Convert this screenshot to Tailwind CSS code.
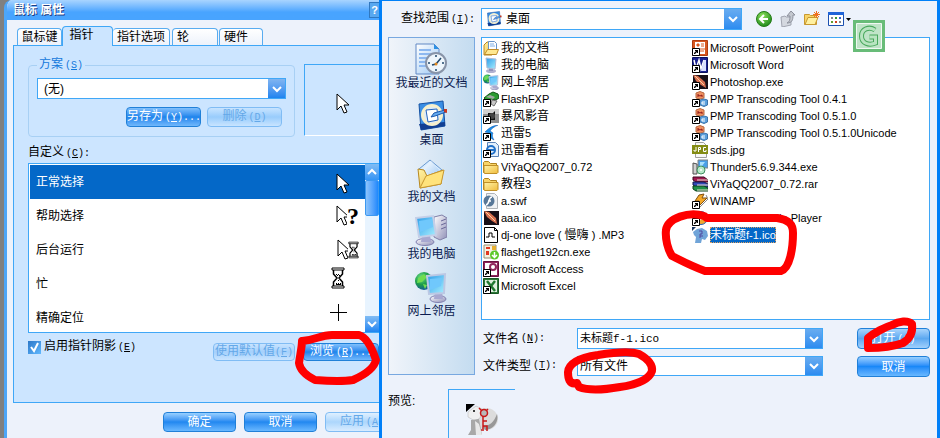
<!DOCTYPE html>
<html lang="zh-CN">
<head>
  <meta charset="UTF-8">
  <meta name="viewport" content="width=device-width, initial-scale=1.0">
  <title>鼠标 属性</title>
  <script src="https://cdn.jsdelivr.net/npm/@tailwindcss/browser@4"></script>
</head>
<body class="bg-[#808080] text-[12px] leading-[16px] text-black font-['Liberation_Sans','Noto_Sans_CJK_SC',sans-serif]">

<!-- shared icons -->
<svg class="absolute size-0">
  <defs>
    <linearGradient id="gScreen" x1="0" y1="0" x2="1" y2="1"><stop offset="0" stop-color="#2c9be8"/><stop offset="1" stop-color="#a8f0ff"/></linearGradient>
    <linearGradient id="gPaper" x1="0" y1="0" x2="1" y2="1"><stop offset="0" stop-color="#ffffff"/><stop offset="1" stop-color="#9cc8f4"/></linearGradient>
    <linearGradient id="gFolder" x1="0" y1="0" x2="1" y2="1"><stop offset="0" stop-color="#fff3a8"/><stop offset="1" stop-color="#f0bc3c"/></linearGradient>
    <linearGradient id="gGrey" x1="0" y1="0" x2="1" y2="1"><stop offset="0" stop-color="#ffffff"/><stop offset="1" stop-color="#9090b8"/></linearGradient>
    <radialGradient id="gGlobe" cx=".35" cy=".3" r=".8"><stop offset="0" stop-color="#6fe08a"/><stop offset=".5" stop-color="#1c9c48"/><stop offset="1" stop-color="#1448b0"/></radialGradient>
    <radialGradient id="gGreen" cx=".4" cy=".3" r=".8"><stop offset="0" stop-color="#8ce05c"/><stop offset="1" stop-color="#148014"/></radialGradient>
  </defs>
  <symbol id="chevron-down" viewBox="0 0 10 8"><path d="M1 2l4 4 4-4" fill="none" stroke="#fff" stroke-width="2"/></symbol>
  <symbol id="chevron-up" viewBox="0 0 10 8"><path d="M1 6l4-4 4 4" fill="none" stroke="#fff" stroke-width="2"/></symbol>
  <symbol id="shortcut" viewBox="0 0 16 16"><path d="M.5 8.500h7v7h-7z" fill="#fff" stroke="#000"/><path d="M2 14v-1l2-2H3v-1h3v3H5v-1l-2 2z"/></symbol>
  <symbol id="cursor" viewBox="0 0 13 22"><path d="M1 1v16l4-4 3 7 3-1-3-7h5z" fill="#fff" stroke="#000"/></symbol>
  <symbol id="hourglass" viewBox="0 0 14 22"><path d="M1 1h12v2H1zM1 19h12v2H1z" fill="#fff" stroke="#000"/><path d="M2.500 3v4l3.500 4-3.500 4v4M11.500 3v4L8 11l3.500 4v4" fill="none" stroke="#000" stroke-width="1.500"/><path d="M5 7h1v1H5zm2 0h1v1H7zM6 8h1v1H6zm2 0h1v1H8zm-1 5h1v1H7zm-2 3h1v1H5zm2 0h1v1H7zm2 0h1v1H9zm-4 1h5v1H5z"/></symbol>
  <symbol id="desktop" viewBox="0 0 32 32"><path d="M3 4l24-3 2 25-24 4z" fill="#3a8ee4" stroke="#1854a4"/><path d="M3 24l26-2v4L5 30z" fill="#123f92"/><circle cx="16" cy="15" r="9.500" fill="#dcebf9" stroke="#f7f0cc" stroke-width="3"/><path d="M10 10l11-1 1 11-10 2z" fill="#fff" stroke="#2464bc"/><path d="M15 17l3-4 11-3 1 2-11 4z" fill="#64aaf0" stroke="#1c58ac"/><path d="M28 9l3 0v4l-3-1z" fill="#c83820"/></symbol>
  <symbol id="recent" viewBox="0 0 32 32"><path d="M1 1h18l5 5v25H1z" fill="url(#gPaper)" stroke="#6088c4"/><path d="M4 7h12M4 11h14M4 15h10M4 19h8M4 23h8" stroke="#8cb8f0" stroke-width="2"/><path d="M19 1v5h5z" fill="#2c90e4"/><circle cx="21" cy="20" r="10" fill="#eef6fc" stroke="#8894a8" stroke-width="2"/><path d="M21 12v2M21 26v2M13 20h2M27 20h2M17 22l4-1 5-6" fill="none" stroke="#20486c" stroke-width="1.500"/><circle cx="21" cy="21" r="1.500" fill="#e08820"/></symbol>
  <symbol id="mydocs" viewBox="0 0 32 32"><path d="M4 12l11-9 12 10-11 9z" fill="#d8ecff" stroke="#6898d0"/><path d="M8 12l8-8 9 10-8 7z" fill="url(#gPaper)"/><path d="M3 12l6 1 3 6 16-6-2 14-21 4z" fill="url(#gFolder)" stroke="#b88820"/><path d="M5 31l6-12 18-6-3 14z" fill="#ffe37c" stroke="#c89830"/></symbol>
  <symbol id="computer" viewBox="0 0 32 32"><path d="M19 3l8-2 5 3v19l-7 3-6-3z" fill="url(#gGrey)" stroke="#8080a8"/><path d="M26 7l5-2M26 11l5-2M26 15l5-2" stroke="#686898"/><ellipse cx="10" cy="28" rx="9" ry="3.500" fill="url(#gGrey)" stroke="#8080b0"/><path d="M7 21h8l1 7H6z" fill="#a8a8d0"/><path d="M1 4l17-2 3 19-17 2z" fill="url(#gScreen)" stroke="#c4cfe8" stroke-width="2"/><path d="M4 7l13-2 1 8-13 5z" fill="#70c8fc"/></symbol>
  <symbol id="monitor" viewBox="0 0 16 16"><ellipse cx="8" cy="14" rx="5" ry="2" fill="#b0b0d0"/><path d="M6 10h4v4H6z" fill="#9090b8"/><path d="M3 1l10 1-1 10-8-1z" fill="url(#gScreen)" stroke="#b0bcd8"/></symbol>
  <symbol id="network" viewBox="0 0 32 32"><circle cx="9" cy="10" r="9" fill="url(#gGlobe)"/><path d="M3 7l6-4 3 3-5 5-5 1zM8 13l4 1-2 4z" fill="#70dc50"/><ellipse cx="23" cy="28" rx="8" ry="3.500" fill="url(#gGrey)" stroke="#8080b0"/><path d="M20 21h7l1 7h-9z" fill="#a8a8d0"/><path d="M12 5l18-2-1 19-15 1z" fill="url(#gScreen)" stroke="#bcc8e4" stroke-width="2"/><path d="M15 8l12-1-1 8-11 4z" fill="#70c8fc"/></symbol>
  <symbol id="docs" viewBox="0 0 16 16"><path d="M1 5l3-3h5v13H1z" fill="url(#gFolder)" stroke="#b88820"/><path d="M5.500 1.500h6l2 2v9h-8z" fill="#fff" stroke="#6894c8"/><path d="M7 4h4M7 6h5" stroke="#80b0e8"/><path d="M1.500 14.500l3-5h11l-2 5z" fill="#ffe890" stroke="#c08c28"/></symbol>
  <symbol id="folder" viewBox="0 0 16 16"><path d="M.5 13.500V3.500l1-1h4l2 2h6v9z" fill="#f8d468" stroke="#b08420"/><path d="M1 14V6.500h14v7l-1 1H2z" fill="url(#gFolder)" stroke="#c09028"/></symbol>
  <symbol id="flashfxp" viewBox="0 0 16 16"><path d="M6 3l4-2 5 2 1 4-3 2-5-1-4 2-3-3z" fill="#2c9c30" stroke="#135818"/><path d="M3 6l4-2 5 2-2 2z" fill="#a0a8a0"/><path d="M9 9l5 1-3 5-3-2z" fill="#c8c8c8" stroke="#707070"/></symbol>
  <symbol id="storm" viewBox="0 0 16 16"><path d="M0 1h16v14H0z" fill="#909090"/><path d="M0 1h16v5H0z" fill="#d0d0d0"/><path d="M5 5h5l2-2v9H5z" fill="#101010"/><circle cx="9" cy="8" r="3" fill="#444"/></symbol>
  <symbol id="thunder" viewBox="0 0 16 16"><path d="M15 0C8 1 5 4 2 7l4 1c0 3 1 5 5 7-2-3-2-5-1-7L7 6c2-3 4-4 8-6z" fill="#1890ec" stroke="#0c50a8" stroke-width=".5"/></symbol>
  <symbol id="iepage" viewBox="0 0 16 16"><path d="M4.500.5h8l3 3v11h-11z" fill="#e4f0fc" stroke="#5c84b8"/><circle cx="8" cy="8" r="4" fill="none" stroke="#2070c8" stroke-width="2"/><path d="M4 8h8" stroke="#2070c8" stroke-width="2"/></symbol>
  <symbol id="swf" viewBox="0 0 16 16"><path d="M3.500.5h8l3 3v12h-11z" fill="#f0f2f4" stroke="#b0b4b8"/><circle cx="6" cy="8" r="5.500" fill="#587898"/><path d="M9 4C5 4 7 11 3 12M5 8h3" fill="none" stroke="#fff" stroke-width="1.500"/></symbol>
  <symbol id="feather" viewBox="0 0 16 16"><path d="M1 1h15v14H1z" fill="#181018"/><path d="M1 1l5 1 7 6 1 6-5-3-5-4z" fill="#d87050"/><path d="M3 2l9 9" stroke="#ffd0a0"/></symbol>
  <symbol id="mp3" viewBox="0 0 16 16"><path d="M1.500.5h10l3 3v12h-13z" fill="#fff" stroke="#000"/><path d="M11.500.5v3h3M3 10h3V6h3v4h3" fill="none" stroke="#000"/></symbol>
  <symbol id="flashget" viewBox="0 0 16 16"><path d="M1 1h12v13H1z" fill="#f4f0e0" stroke="#989070"/><path d="M3 3h4v2H3zM3 7h3v4H3z" fill="#e03820"/><path d="M9 2h4v4H9z" fill="#e8b030"/><circle cx="11.500" cy="11" r="4.500" fill="#5cc828"/><path d="M11.500 8v5M9 11l2.500 2.500L14 11" fill="none" stroke="#fff" stroke-width="1.500"/></symbol>
  <symbol id="access" viewBox="0 0 16 16"><path d="M.5.500h15v15H.5z" fill="#90245c" stroke="#681040"/><path d="M2 2h12v12H2z" fill="#fff"/><circle cx="10" cy="6" r="3" fill="none" stroke="#90245c" stroke-width="2"/><path d="M8 8l-5 5" stroke="#90245c" stroke-width="2"/></symbol>
  <symbol id="excel" viewBox="0 0 16 16"><path d="M.5.500h15v15H.5z" fill="#2c7838" stroke="#185824"/><path d="M2 2h12v12H2z" fill="#e0f0e0"/><path d="M4 3l8 10M12 3L4 13" stroke="#207830" stroke-width="2.500"/></symbol>
  <symbol id="ppt" viewBox="0 0 16 16"><path d="M.5.500h15v15H.5z" fill="#d85820" stroke="#b03c10"/><path d="M3 2h10v12H3z" fill="#fff"/><path d="M5 4h2v2H5zM9 4h3M9 6h3M8 9h5M7 11h5" fill="#d85820" stroke="#d85820"/></symbol>
  <symbol id="word" viewBox="0 0 16 16"><path d="M.5.500h15v15H.5z" fill="#182090" stroke="#081060"/><path d="M2 3l2 9 3-9 2 9 3-9" fill="none" stroke="#fff" stroke-width="1.500"/><path d="M12 3h2v11H9z" fill="#d8e0ff"/></symbol>
  <symbol id="pmp" viewBox="0 0 16 16"><path d="M4 2l4-1.500L12 2v5L8 8 4 7z" fill="#f09060" stroke="#b86840"/><path d="M6 3v3M6 4l2 1 2-1v2" fill="none" stroke="#901818"/><path d="M8 9l4-1 3.500 1v5L12 15.500 8 14z" fill="#5ca0dc" stroke="#3c74ac"/><path d="M13 11h-3v2h3" fill="none" stroke="#fff"/></symbol>
  <symbol id="jpg" viewBox="0 0 16 16"><path d="M3.500.5h8l3 3v12h-11z" fill="#f8f8f8" stroke="#a0a0a0"/><path d="M0 3h16v9H0z" fill="#848c14"/><path d="M4 5v4H2V8M6.500 10V5.500h2v2h-2M14 5.500h-2.500v4H14V8" fill="none" stroke="#fff"/></symbol>
  <symbol id="setup" viewBox="0 0 16 16"><path d="M6 1h10v8H6z" fill="#4aa0e8" stroke="#808080"/><path d="M8 3h5l-3 4H8z" fill="#a8e0ff"/><path d="M1 4l4 1v10H1z" fill="#d0d0d0" stroke="#505050"/><circle cx="9" cy="11" r="4" fill="#b8e8c8" stroke="#409060"/><circle cx="9" cy="11" r="1" fill="#fff"/></symbol>
  <symbol id="rar" viewBox="0 0 16 16"><path d="M1 1h11l4 3v2H4L1 4z" fill="#a01850" stroke="#400820"/><path d="M1 6h11l4 2v3H4L1 9z" fill="#3048b8" stroke="#101848"/><path d="M1 10h11l4 2v3H4l-3-2z" fill="#209048" stroke="#084018"/><path d="M5 4h11M5 9h11M5 14h11" stroke="#e8e0d0"/></symbol>
  <symbol id="winamp" viewBox="0 0 16 16"><path d="M7 2l5-1-2 4h5l-9 9 1-6H3z" fill="#f4a828" stroke="#805010"/><path d="M14 2l2 4-9 9" fill="none" stroke="#888"/></symbol>
  <symbol id="wmp" viewBox="0 0 16 16"><circle cx="9" cy="8" r="6.500" fill="#f0a830" stroke="#2860b0"/><path d="M7 5l5 3-5 3z" fill="#fff"/></symbol>
  <symbol id="dogico" viewBox="0 0 16 16"><path d="M0 0h4L0 4z" fill="#183460"/><path d="M1 5l4-3 5-1 5 3 1 5-3 4-3-1-1 4H3l1-6-2-2z" fill="#70a4d8"/><path d="M7 4h3v3H8v4M8 9h3" fill="none" stroke="#5048a0"/></symbol>
</svg>

<main class="relative grid min-h-[438px] grid-cols-[379fr_561fr] overflow-hidden">

  <!-- mouse properties -->
  <section class="ml-1 flex min-w-0 flex-col overflow-hidden rounded-tl-lg border-l-3 border-[#4da6f8] bg-[#edf2fb]">
    <header class="flex h-5 items-center justify-between bg-linear-to-b from-[#a8d4ff] to-[#48a4ff] to-60% pl-1.5">
      <h1 class="font-bold text-white [text-shadow:1px_1px_0_#203c80]">鼠标 属性</h1>
      <button aria-label="帮助" class="h-4 w-2.5 border border-r-0 border-[#3078c0] bg-[#58a8f0] text-[11px] leading-[14px] font-bold text-white">?</button>
    </header>

    <nav class="relative z-10 -mb-px flex h-[26px] items-end pl-2.5">
      <button class="h-[18px] w-[45px] rounded-t-sm border border-b-[#3fa7f7] border-[#58acf0] bg-linear-to-b from-white to-[#edf2fb] whitespace-nowrap">鼠标键</button>
      <button class="h-5 w-[51px] rounded-t-sm border border-b-0 border-[#3fa7f7] bg-[#cce5ff] pr-3 pb-1">指针</button>
      <button class="mr-0.5 h-[18px] w-[57px] rounded-t-sm border border-l-0 border-b-[#3fa7f7] border-[#58acf0] bg-linear-to-b from-white to-[#edf2fb] whitespace-nowrap">指针选项</button>
      <button class="mr-px h-[18px] w-[46px] rounded-t-sm border border-b-[#3fa7f7] border-[#58acf0] bg-linear-to-b from-white to-[#edf2fb] pl-1 text-left">轮</button>
      <button class="h-[18px] w-11 rounded-t-sm border border-b-[#3fa7f7] border-[#58acf0] bg-linear-to-b from-white to-[#edf2fb] pl-1 text-left">硬件</button>
    </nav>

    <div class="ml-1.5 flex h-[358px] flex-col border border-r-0 border-[#3fa7f7] bg-[#cce5ff] pl-3.5">
      <div class="flex gap-[9px] pt-2.5">
        <fieldset class="h-[81px] w-[267px] rounded-sm border border-[#a8d0f4] px-2 pb-2.5">
          <legend class="px-0.5 text-[#1478dc]">方案<span class="ml-0.5 font-['Liberation_Mono'] text-[10px]">(<u>S</u>)</span></legend>
          <div class="mt-1 flex h-[21px] border border-[#3fa7f7] bg-white">
            <select aria-label="方案" class="min-w-0 flex-1 appearance-none pl-1.5"><option>(无)</option></select>
            <span class="pointer-events-none flex w-[17px] items-center justify-center bg-linear-to-b from-[#80b4f0] to-[#1c84f0]"><svg class="h-2 w-2.5"><use href="#chevron-down"/></svg></span>
          </div>
          <div class="mt-2 flex justify-end gap-1.5 pr-1">
            <button class="h-5 w-[75px] rounded border border-[#2080d8] bg-linear-to-b from-[#80c0fc] via-[#1c84ec] to-[#70b8fc] leading-[16px] whitespace-nowrap text-white">另存为<span class="ml-0.5 font-['Liberation_Mono'] text-[10px]">(<u>Y</u>)...</span></button>
            <button disabled class="h-5 w-[75px] rounded border border-[#80bcf4] bg-linear-to-b from-[#c8e4ff] via-[#98ccfc] to-[#c8e4ff] leading-[16px] whitespace-nowrap text-[#64a8e8]">删除<span class="ml-0.5 font-['Liberation_Mono'] text-[10px]">(<u>D</u>)</span></button>
          </div>
        </fieldset>
        <div class="mt-2 flex h-[72px] flex-1 items-center justify-center border border-r-0 border-[#3fa7f7] border-b-white pt-2">
          <svg class="h-[22px] w-[13px]"><use href="#cursor"/></svg>
        </div>
      </div>

      <h2 class="mt-1.5 h-5 leading-[18px]">自定义<span class="ml-0.5 font-['Liberation_Mono'] text-[10px]">(<u>C</u>):</span></h2>
      <div class="flex h-[170px] border border-r-0 border-[#3fa7f7] bg-white">
        <ul class="flex-1 pt-px pl-px">
          <li class="flex h-[34px] items-center justify-between bg-[#0468c8] pr-4 pl-1.5 text-white">正常选择<svg class="mt-1 h-[22px] w-[13px]"><use href="#cursor"/></svg></li>
          <li class="flex h-[34px] items-center justify-between pr-1.5 pl-1.5">帮助选择<span class="flex items-center"><svg class="h-[22px] w-[11px]" viewBox="0 0 11 22"><use href="#cursor" width="13" height="22"/></svg><b class="font-['Liberation_Serif'] text-[24px] leading-[20px]">?</b></span></li>
          <li class="flex h-[34px] items-center justify-between pr-1.5 pl-1.5">后台运行<span class="flex items-center"><svg class="h-[22px] w-[11px]" viewBox="0 0 11 22"><use href="#cursor" width="13" height="22"/></svg><svg class="h-[18px] w-[11px]"><use href="#hourglass"/></svg></span></li>
          <li class="flex h-[34px] items-start justify-between pr-5 pl-1.5 leading-[34px]">忙<svg class="h-[22px] w-[14px]"><use href="#hourglass"/></svg></li>
          <li class="flex h-[34px] items-center justify-between pr-[18px] pl-1.5">精确定位<svg class="mb-3 h-[17px] w-[17px]" viewBox="0 0 17 17"><path d="M8.500 0v17M0 8.500h17" stroke="#000"/></svg></li>
        </ul>
        <div class="flex w-3.5 flex-col bg-[#e8f4ff]">
          <button aria-label="向上" class="flex h-4 items-center justify-center bg-linear-to-b from-[#80bcf4] to-[#3494f4]"><svg class="h-2 w-2.5"><use href="#chevron-up"/></svg></button>
          <div class="h-9 rounded-xs border border-[#3c98f0] bg-linear-to-r from-[#8cc4fc] to-[#1c88fc]"></div>
          <button aria-label="向下" class="mt-auto flex h-4 items-center justify-center bg-linear-to-b from-[#80bcf4] to-[#1c84f0]"><svg class="h-2 w-2.5"><use href="#chevron-down"/></svg></button>
        </div>
      </div>

      <div class="flex pt-1.5">
        <label class="flex h-4 items-center gap-[3px]">
          <input type="checkbox" checked class="peer sr-only">
          <span class="flex size-[13px] items-center justify-center bg-linear-to-br from-[#2c78c8] to-[#60b8ff]"><svg class="size-[11px]" viewBox="0 0 11 11"><path d="M2 5l3 4 4-8" fill="none" stroke="#fff" stroke-width="2"/></svg></span>
          <span>启用指针阴影<span class="ml-0.5 font-['Liberation_Mono'] text-[10px]">(<u>E</u>)</span></span>
        </label>
        <div class="mt-1 ml-auto flex gap-2">
          <button disabled class="h-[18px] w-[82px] rounded border border-[#80bcf4] bg-linear-to-b from-[#c8e4ff] via-[#a4d0fc] to-[#c8e4ff] leading-[14px] whitespace-nowrap text-[#64a8e8]">使用默认值<span class="font-['Liberation_Mono'] text-[10px]">(<u>F</u>)</span></button>
          <button class="h-[18px] w-[76px] rounded border border-[#2080d8] bg-linear-to-b from-[#80c0fc] via-[#1c84ec] to-[#70b8fc] leading-[14px] whitespace-nowrap text-white">浏览<span class="ml-0.5 font-['Liberation_Mono'] text-[10px]">(<u>R</u>)...</span></button>
        </div>
      </div>
    </div>

    <footer class="mt-[9px] flex gap-2 overflow-hidden pl-[156px]">
      <button class="h-5 w-[73px] shrink-0 rounded border border-[#2080d8] bg-linear-to-b from-[#98d0ff] via-[#2088f0] to-[#68b8ff] leading-[16px] text-white">确定</button>
      <button class="h-5 w-[73px] shrink-0 rounded border border-[#2080d8] bg-linear-to-b from-[#98d0ff] via-[#2088f0] to-[#68b8ff] leading-[16px] text-white">取消</button>
      <button disabled class="h-5 w-[75px] shrink-0 rounded border border-[#80bcf4] bg-linear-to-b from-[#e0f0ff] via-[#acd6fc] to-[#d8ecff] pl-3.5 text-left leading-[16px] whitespace-nowrap text-[#64a8e8]">应用<span class="ml-0.5 font-['Liberation_Mono'] text-[10px]">(<u>A</u>)</span></button>
    </footer>
  </section>

  <!-- open file dialog -->
  <section class="flex min-w-0 flex-col border-x-3 border-t border-[#0080f8] bg-[#edf2fb] pr-[7px] pl-1.5">
    <div class="flex h-9 items-center">
      <label for="lookin" class="w-[93px] pl-[13px] whitespace-nowrap">查找范围<span class="ml-0.5 font-['Liberation_Mono'] text-[10px]">(<u>I</u>):</span></label>
      <div class="flex h-[22px] w-[261px] items-center border border-[#3fa7f7] bg-white">
        <svg class="mx-1 size-4"><use href="#desktop"/></svg>
        <select id="lookin" class="min-w-0 flex-1 appearance-none"><option>桌面</option></select>
        <span class="pointer-events-none flex w-[17px] items-center justify-center self-stretch bg-linear-to-b from-[#68acf0] to-[#2c8cf0]"><svg class="h-2 w-2.5"><use href="#chevron-down"/></svg></span>
      </div>
      <div class="ml-3.5 flex items-center gap-2">
        <button aria-label="后退"><svg class="size-4" viewBox="0 0 16 16"><circle cx="8" cy="8" r="7.500" fill="url(#gGreen)" stroke="#247c18"/><path d="M12 8H5M8 4L4 8l4 4" fill="none" stroke="#fff" stroke-width="2"/></svg></button>
        <button aria-label="向上一级"><svg class="size-4" viewBox="0 0 16 16"><path d="M1 6l4-1 1 1h5v8l-9 2z" fill="#d4d8e0" stroke="#a0a4b0"/><path d="M7 12c3-1 3-4 3-7H7l4-5 4 4h-2c0 5-1 8-6 8z" fill="#c4c8d0" stroke="#8c909c"/></svg></button>
        <button aria-label="新建文件夹"><svg class="size-4" viewBox="0 0 16 16"><path d="M.5 3.500h5l1 1h6v9H.5z" fill="#f8d468" stroke="#c89830"/><path d="M1 13.500l3-7h10l-3 7z" fill="#fff0a0" stroke="#c89830"/><path d="M12.500 0v7M9 3.500h7M10 1l5 5M15 1l-5 5" stroke="#f07020"/></svg></button>
        <button aria-label="查看" class="flex items-center gap-0.5"><svg class="h-3.5 w-4" viewBox="0 0 16 14"><path d="M.5.500h15v13H.5z" fill="#fff" stroke="#1c50b0"/><path d="M0 0h16v3H0z" fill="#2064d8"/><path d="M3 5h2v2H3zM11 9h2v2h-2z" fill="#808890"/><path d="M7 5h2v2H7z" fill="#389838"/><path d="M11 5h2v2h-2z" fill="#3060d0"/><path d="M3 9h2v2H3z" fill="#60a030"/><path d="M7 9h2v2H7z" fill="#d04020"/></svg><svg class="h-[3px] w-[5px]" viewBox="0 0 5 3"><path d="M0 0h5L2.500 3z"/></svg></button>
      </div>
    </div>

    <div class="flex gap-[6px]">
      <nav id="places" class="flex h-[338px] w-[87px] shrink-0 flex-col items-center gap-[7px] border border-[#78a8e0] bg-linear-to-r from-[#f0f4fa] to-[#c4dcf0] pt-[5px]"></nav>

      <div class="flex min-w-0 flex-1 flex-col">
        <ul id="files" class="grid h-[283px] grid-flow-col grid-cols-[209px_1fr] grid-rows-[repeat(15,17px)] border border-[#3fa7f7] bg-white pt-px pl-px"></ul>

        <div class="mt-2 grid grid-cols-[96px_246px_1fr] gap-y-[7px]">
          <label for="fname" class="flex h-[21px] items-center pl-0.5">文件名<span class="ml-0.5 font-['Liberation_Mono'] text-[10px]">(<u>N</u>):</span></label>
          <div class="flex h-[21px] border border-[#3fa7f7] bg-white">
            <input id="fname" type="text" value="未标题f-1.ico" class="min-w-0 flex-1 pl-0.5 font-['Liberation_Mono','Noto_Sans_CJK_SC',monospace] text-[11px]">
            <button aria-label="历史" class="flex w-[17px] items-center justify-center bg-linear-to-b from-[#68acf0] to-[#2c8cf0]"><svg class="h-2 w-2.5"><use href="#chevron-down"/></svg></button>
          </div>
          <button class="h-[21px] w-[73px] justify-self-end rounded border border-[#2080d8] bg-linear-to-b from-[#a8d4fc] via-[#5ca8f0] to-[#a0d0fc] leading-[16px] whitespace-nowrap text-white">打开<span class="ml-0.5 font-['Liberation_Mono'] text-[10px]">(<u>O</u>)</span></button>

          <label for="ftype" class="flex h-5 items-center pl-0.5">文件类型<span class="ml-0.5 font-['Liberation_Mono'] text-[10px]">(<u>T</u>):</span></label>
          <div class="flex h-5 border border-[#3fa7f7] bg-white">
            <select id="ftype" class="min-w-0 flex-1 appearance-none pl-0.5"><option>所有文件</option></select>
            <span class="pointer-events-none flex w-[17px] items-center justify-center bg-linear-to-b from-[#68acf0] to-[#2c8cf0]"><svg class="h-2 w-2.5"><use href="#chevron-down"/></svg></span>
          </div>
          <button class="h-[21px] w-[73px] justify-self-end rounded border border-[#2080d8] bg-linear-to-b from-[#98d0ff] via-[#1888f8] to-[#68b8ff] leading-[16px] text-white">取消</button>
        </div>
      </div>
    </div>

    <div class="mt-3 flex flex-1">
      <h2 class="w-[60px] pt-1">预览:</h2>
      <div class="w-[67px] border-t border-l border-[#3fa7f7] pt-3.5 pl-[17px]">
        <svg class="size-8" viewBox="0 0 32 32"><ellipse cx="20" cy="15" rx="12" ry="11" fill="#dcdcdc"/><path d="M31 10c2 8-3 15-12 16l-2-4c7 0 11-4 14-12z" fill="#989898"/><path d="M2 8l8-6 6 3-2 9-5 3-7-4z" fill="#f0f0f0" stroke="#b0b0b0" stroke-width=".5"/><path d="M5 16l8-1 3 16H2l3-5z" fill="#a8a8a8"/><path d="M9 17l4 3 3 11h-6z" fill="#e8e8e8"/><path d="M0 0h9L0 8z"/><circle cx="8" cy="7" r="1"/><circle cx="18" cy="9" r="3.500" fill="#b8b8b8" stroke="#c81818" stroke-width="1.500"/><path d="M13 4l3 3M22 5l-2 2M17 13v12M17 17h4M17 22h4v5M15 26h3" fill="none" stroke="#c81818" stroke-width="1.500"/></svg>
      </div>
    </div>
  </section>

  <!-- watermark -->
  <svg class="absolute top-5 left-[853px] size-8" viewBox="0 0 32 32"><path d="M0 0h32v32H0z" fill="#68bc78"/><path d="M3.500 3.500h25v25h-25z" fill="#c0e4c8" stroke="#f0f8f2"/><path d="M22 10C16 6 8.500 9 8.500 16s7 10 14 7v-6h-6" fill="none" stroke="#48a85c" stroke-width="5"/><path d="M22 10C16 6 8.500 9 8.500 16s7 10 14 7v-6h-6" fill="none" stroke="#b8e4c0" stroke-width="3"/></svg>

  <!-- red marker strokes -->
  <svg class="pointer-events-none absolute top-0 left-0 h-[438px] w-[940px]" viewBox="0 0 940 438" fill="none" stroke="#f00" stroke-width="8" stroke-linejoin="round" stroke-linecap="round">
    <path d="M302 341c14-1 18-6 30-6h27c7 2 13 13 17 25-2 9-14 16-23 20-12 2-26 1-38 0-8-4-15-10-16-17 1-8 3-16 3-22z"/>
    <path d="M704 216c-15-5-36 2-38 14-1 9 2 20 6 26 8 4 19 10 33 15h76c9-3 12-23 12-38 0-9-4-13-16-15h-70c-1 0-2-2-3-2z"/>
    <path d="M577 383c-8 2-9-5-9-11 1-11 16-15 30-17 18-3 33-4 41-1 9 5 14 10 13 17-3 9-17 14-32 16-17 3-31 4-41 0z"/>
    <path d="M868 348v-10c6-5 17-11 24-13 7-4 16-5 20-1 1 8-1 14-9 19-11 4-24 5-35 5z"/>
  </svg>
</main>

<script>
  const places = [
    ['recent', '我最近的文档'],
    ['desktop', '桌面'],
    ['mydocs', '我的文档'],
    ['computer', '我的电脑'],
    ['network', '网上邻居'],
  ];

  // [icon, name, is shortcut]
  const files = [
    ['docs', '我的文档'], ['monitor', '我的电脑'], ['network', '网上邻居'],
    ['flashfxp', 'FlashFXP', 1], ['storm', '暴风影音', 1], ['thunder', '迅雷5', 1], ['iepage', '迅雷看看', 1],
    ['folder', 'ViYaQQ2007_0.72'], ['folder', '教程3'], ['swf', 'a.swf'], ['feather', 'aaa.ico'],
    ['mp3', 'dj-one love ( 慢嗨 ) .MP3'], ['flashget', 'flashget192cn.exe'],
    ['access', 'Microsoft Access', 1], ['excel', 'Microsoft Excel', 1],
    ['ppt', 'Microsoft PowerPoint', 1], ['word', 'Microsoft Word', 1], ['feather', 'Photoshop.exe', 1],
    ['pmp', 'PMP Transcoding Tool 0.4.1', 1], ['pmp', 'PMP Transcoding Tool 0.5.1.0', 1],
    ['pmp', 'PMP Transcoding Tool 0.5.1.0Unicode', 1], ['jpg', 'sds.jpg'], ['setup', 'Thunder5.6.9.344.exe'],
    ['rar', 'ViYaQQ2007_0.72.rar'], ['winamp', 'WINAMP', 1], ['wmp', 'Windows Media Player', 1],
    ['dogico', '未标题f-1.ico'],
  ];
  const selected = '未标题f-1.ico';

  document.getElementById('places').innerHTML = places.map(([icon, name]) => `
    <button class="flex h-[50px] flex-col items-center whitespace-nowrap text-[#0c1c50]">
      <svg class="size-8"><use href="#${icon}"/></svg>${name}
    </button>`).join('');

  // Latin runs are set a size smaller than the Chinese ones
  const latin = (name) => name.replace(/[ -~]+/g, (run) => `<span class="text-[11px]">${run}</span>`);

  document.getElementById('files').innerHTML = files.map(([icon, name, link]) => `
    <li class="flex items-center gap-0.5 whitespace-nowrap font-['Liberation_Sans','Noto_Sans_CJK_SC',sans-serif]">
      <svg class="size-4 shrink-0"><use href="#${icon}"/>${link ? '<use href="#shortcut"/>' : ''}</svg>
      <span class="${name === selected ? 'bg-[#0468c8] text-white outline outline-dotted outline-[#e0a060] -outline-offset-1' : ''}">${latin(name)}</span>
    </li>`).join('');
</script>
</body>
</html>
